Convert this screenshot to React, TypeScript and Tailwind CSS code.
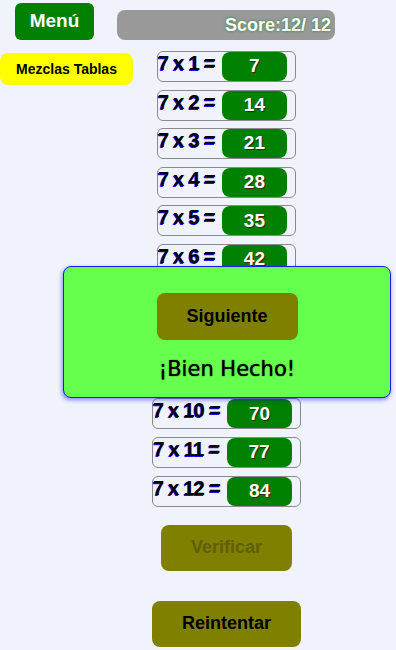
import React from "react"

const rows = Array.from({ length: 12 }, (_, i) => ({ n: i + 1, answer: 7 * (i + 1) }))

function Row({ n, answer }: { n: number; answer: number }) {
  return (
    <div className="flex h-[31px] items-start rounded-md border border-[#8a8a8a] pr-2">
      <span className="whitespace-pre pt-0 text-[20px] font-bold leading-[23px] tracking-[-0.7px] text-black [text-shadow:-1px_1px_0_#1010ff]">
        {`7 x ${n} =`}
      </span>
      <div className="ml-[7px] flex h-[29px] w-[65px] items-center justify-center rounded-lg bg-[#008000] text-[19px] font-bold text-white [text-shadow:1px_1px_1px_#402000]">
        {answer}
      </div>
    </div>
  )
}

export default function App() {
  return (
    <div className="relative h-[650px] w-[396px] overflow-hidden bg-[#f0f3fc] font-['Liberation_Sans',Arial,sans-serif]">
      {/* header */}
      <div className="flex items-start">
        <button className="ml-[15px] mt-[3px] h-[37px] w-[79px] rounded-md bg-[#008000] text-[19px] font-bold text-white">
          Menú
        </button>
        <div className="ml-[23px] mt-[10px] flex h-[30px] w-[218px] items-center justify-end rounded-lg bg-[#999999] pr-1 text-[18px] font-bold text-white [text-shadow:0_0_3px_#1a8a3a]">
          Score:12/ 12
        </div>
      </div>

      {/* body */}
      <div className="mt-[11px] grid">
        <button className="mt-[2px] h-[32px] w-[133px] self-start justify-self-start rounded-lg bg-[#ffff00] text-[14px] font-bold text-black [grid-area:1/1]">
          Mezclas Tablas
        </button>
        <div className="flex flex-col items-center pl-[57px] [grid-area:1/1]">
          <div className="flex flex-col items-center gap-[7.6px]">
            {rows.map((r) => (
              <Row key={r.n} n={r.n} answer={r.answer} />
            ))}
          </div>
          <button
            disabled
            className="mt-[18px] h-[46px] w-[131px] rounded-lg bg-[#808000] text-[18px] font-bold text-[#5f5f08]"
          >
            Verificar
          </button>
          <button className="mt-[30px] h-[46px] w-[149px] rounded-lg bg-[#808000] text-[18px] font-bold text-black">
            Reintentar
          </button>
        </div>
      </div>

      {/* result popup */}
      <div className="absolute left-[63px] top-[266px] flex h-[132px] w-[328px] flex-col items-center rounded-lg border-[1.5px] border-[#1a1aff] bg-[#66ff4d] shadow-[-1px_2px_4px_rgba(0,0,255,0.45)]">
        <button className="mt-[26px] h-[47px] w-[141px] rounded-lg bg-[#808000] text-[18px] font-bold text-black">
          Siguiente
        </button>
        <div className="mt-[14px] font-['DejaVu_Sans',sans-serif] text-[21px] text-black [text-shadow:0_0_1px_#000]">
          ¡Bien Hecho!
        </div>
      </div>
    </div>
  )
}
